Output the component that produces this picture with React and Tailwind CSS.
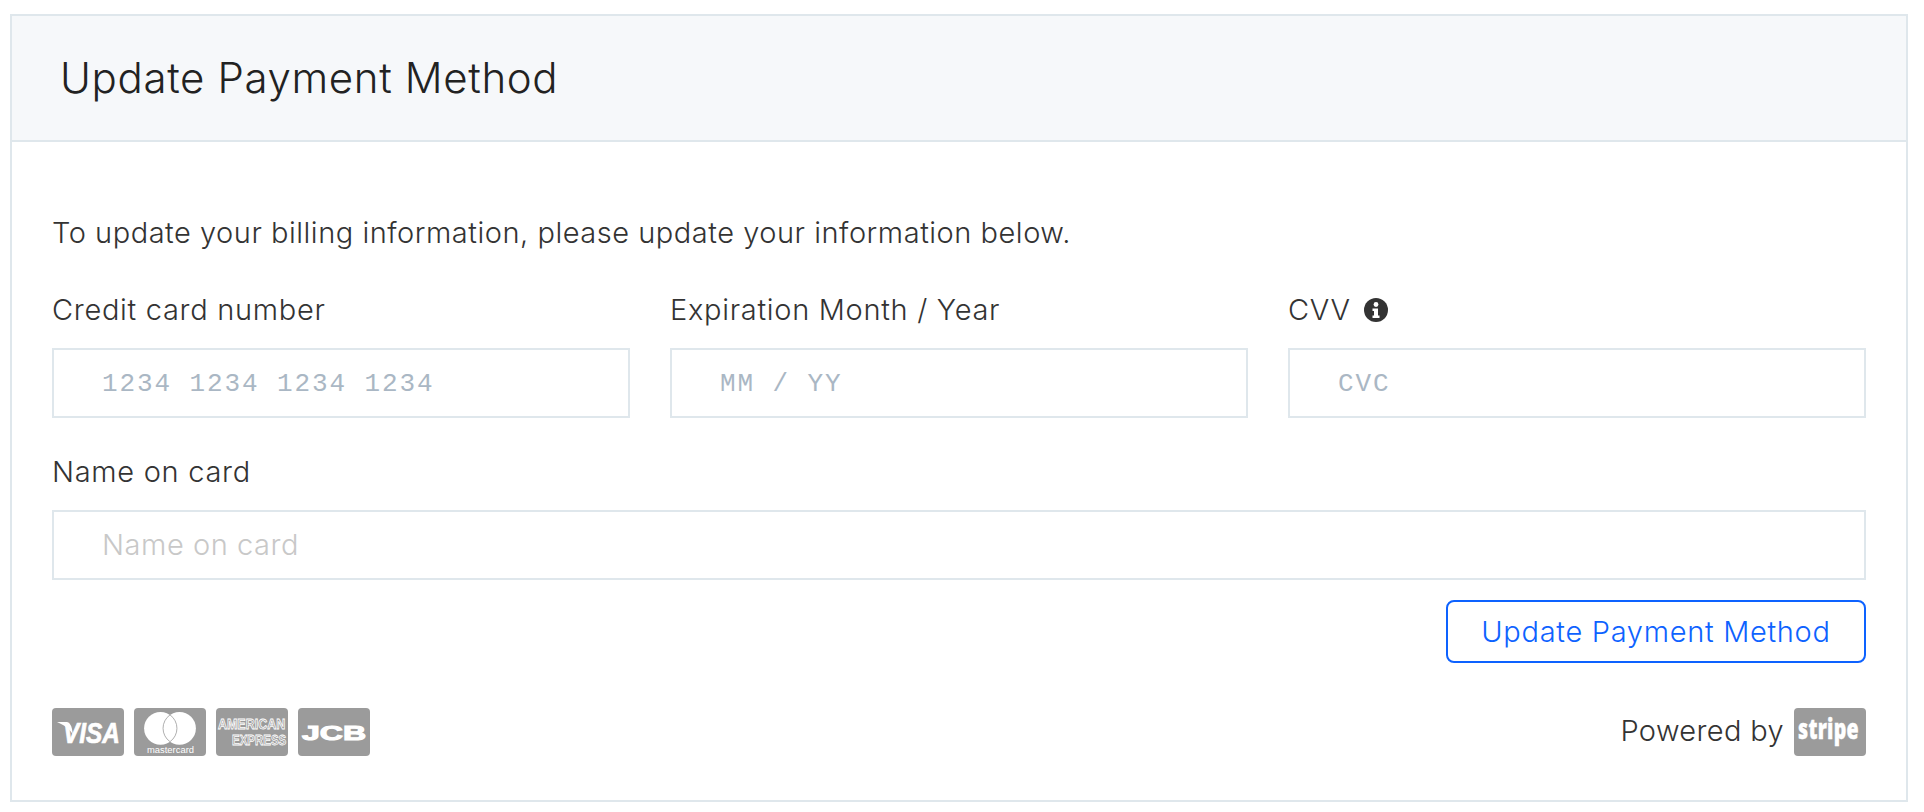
import React from "react";

const UI_FONT = "font-['Inter','Liberation_Sans',sans-serif]";

const CardBadge = ({ children }) => (
  <svg width="72" height="48" viewBox="0 0 72 48" className="block">
    <rect width="72" height="48" rx="4" fill="#9b9b9b" />
    {children}
  </svg>
);

const VisaIcon = () => (
  <CardBadge>
    <path d="M5 14 L15 14 C18 15 19 17 20 21 L21 27 C18 21 12 17 5 14Z" fill="#fff" />
    <text transform="translate(11 35) scale(0.84 1)" fill="#fff" stroke="#fff" strokeWidth="0.7" fontFamily="Liberation Sans" fontWeight="700" fontStyle="italic" fontSize="29">VISA</text>
  </CardBadge>
);

const MastercardIcon = () => (
  <CardBadge>
    <circle cx="26.5" cy="20.3" r="16.4" fill="#fff" />
    <circle cx="45.5" cy="20.3" r="16.4" fill="#fff" />
    <path d="M36 6.9 A16.4 16.4 0 0 1 36 33.7 A16.4 16.4 0 0 1 36 6.9Z" fill="#fff" stroke="#9b9b9b" strokeWidth="0.8" />
    <text x="13" y="45" fill="#fff" fontFamily="Liberation Sans" fontSize="8.5" textLength="47" lengthAdjust="spacingAndGlyphs">mastercard</text>
  </CardBadge>
);

const AmexIcon = () => (
  <CardBadge>
    <text transform="translate(2 21) scale(0.89 1)" fill="#9b9b9b" stroke="#fff" strokeWidth="0.8" fontFamily="Liberation Sans" fontWeight="700" fontSize="14">AMERICAN</text>
    <text transform="translate(16 37) scale(0.82 1)" fill="#9b9b9b" stroke="#fff" strokeWidth="0.8" fontFamily="Liberation Sans" fontWeight="700" fontSize="14">EXPRESS</text>
  </CardBadge>
);

const JcbIcon = () => (
  <CardBadge>
    <text x="4" y="32" fill="#fff" stroke="#fff" strokeWidth="1.1" fontFamily="Liberation Sans" fontWeight="700" fontSize="21" textLength="64" lengthAdjust="spacingAndGlyphs">JCB</text>
  </CardBadge>
);

const StripeIcon = () => (
  <CardBadge>
    <text transform="translate(4 31) scale(0.7 1)" fill="#fff" stroke="#fff" strokeWidth="0.4" fontFamily="Open Sans" fontWeight="800" fontSize="28">stripe</text>
  </CardBadge>
);

const InfoIcon = () => (
  <svg width="24" height="24" viewBox="0 0 24 24">
    <circle cx="12" cy="12" r="12" fill="#333" />
    <circle cx="12" cy="6.5" r="2.4" fill="#fff" />
    <path d="M8.5 10.5h5.5v7h1.5v2.5h-7v-2.5h1.5v-4.5h-1.5z" fill="#fff" />
  </svg>
);

const Field = ({ label, placeholder, mono, extra }) => (
  <div className="flex-1 min-w-0">
    <label className="flex items-center gap-[13px] h-[40px] pt-[2px] mb-[19px] text-[29px] leading-[40px] font-light tracking-[0.7px] text-[#333]">
      {label}
      {extra}
    </label>
    <input
      readOnly
      placeholder={placeholder}
      className={
        mono
          ? "block w-full h-[70px] border-2 border-[#dfe7ec] bg-white pl-[48px] pt-[2px] font-['Liberation_Mono',monospace] text-[26px] tracking-[1.9px] placeholder:text-[#aab7c4] outline-none"
          : "block w-full h-[70px] border-2 border-[#dfe7ec] bg-white pl-[48px] pb-[2px] text-[29px] font-light tracking-[0.55px] placeholder:text-[#c8c8c8] outline-none"
      }
    />
  </div>
);

const App = () => {
  return (
    <div className={`${UI_FONT} bg-white min-h-[812px] pt-[14px] pl-[10px] w-[1924px]`}>
      <div className="w-[1898px] border-2 border-[#dfe7ec] bg-white">
        <div className="h-[126px] bg-[#f6f8fa] border-b-2 border-[#dfe7ec] pl-[48px] pb-[2px] flex items-center">
          <h1 className="text-[42px] font-light tracking-[0.65px] text-[#222]">Update Payment Method</h1>
        </div>
        <div className="px-[40px] pt-[71px] pb-[44px]">
          <p className="h-[40px] leading-[40px] mb-[36px] text-[29px] font-light tracking-[0.52px] text-[#333]">
            To update your billing information, please update your information below.
          </p>
          <div className="flex gap-[40px] mb-[33px]">
            <Field label="Credit card number" placeholder="1234 1234 1234 1234" mono />
            <Field label="Expiration Month / Year" placeholder="MM / YY" mono />
            <Field label="CVV" placeholder="CVC" mono extra={<InfoIcon />} />
          </div>
          <Field label="Name on card" placeholder="Name on card" />
          <div className="flex justify-end mt-[20px]">
            <button className="w-[420px] h-[63px] border-2 border-[#0d62ff] rounded-[8px] text-[29px] font-light tracking-[0.7px] text-[#0d62ff] bg-white">
              Update Payment Method
            </button>
          </div>
          <div className="flex items-center justify-between mt-[45px]">
            <div className="flex gap-[10px]">
              <VisaIcon />
              <MastercardIcon />
              <AmexIcon />
              <JcbIcon />
            </div>
            <div className="flex items-center gap-[10px] text-[29px] font-light tracking-[0.35px] text-[#333]">
              <span className="pb-[2px]">Powered by</span>
              <StripeIcon />
            </div>
          </div>
        </div>
      </div>
    </div>
  );
};

export default App;
